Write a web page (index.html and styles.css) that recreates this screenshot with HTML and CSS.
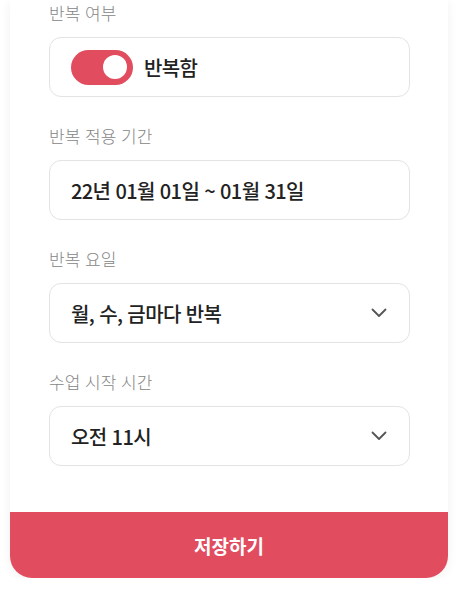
FILE: index.html
```html
<!DOCTYPE html>
<html lang="ko">
<head>
    <meta charset="UTF-8">
    <meta name="viewport" content="width=device-width, initial-scale=1.0">
    <title>반복 설정</title>
    <link rel="stylesheet" href="styles.css">
</head>
<body>
    <div class="card">
        <div class="form">
            <div class="field">
                <div class="label">반복 여부</div>
                <div class="box">
                    <span class="toggle"><span class="knob"></span></span>
                    <span class="value">반복함</span>
                </div>
            </div>
            <div class="field">
                <div class="label">반복 적용 기간</div>
                <div class="box">
                    <span class="value">22년 01월 01일 ~ 01월 31일</span>
                </div>
            </div>
            <div class="field">
                <div class="label">반복 요일</div>
                <div class="box select">
                    <span class="value">월, 수, 금마다 반복</span>
                    <svg class="chevron" width="16" height="10" viewBox="0 0 16 10">
                        <path d="M1.5 1.5 L8 8 L14.5 1.5" fill="none" stroke="#555" stroke-width="1.8" stroke-linecap="round" stroke-linejoin="round"/>
                    </svg>
                </div>
            </div>
            <div class="field">
                <div class="label">수업 시작 시간</div>
                <div class="box select">
                    <span class="value">오전 11시</span>
                    <svg class="chevron" width="16" height="10" viewBox="0 0 16 10">
                        <path d="M1.5 1.5 L8 8 L14.5 1.5" fill="none" stroke="#555" stroke-width="1.8" stroke-linecap="round" stroke-linejoin="round"/>
                    </svg>
                </div>
            </div>
        </div>
        <button class="save-btn">저장하기</button>
    </div>
</body>
</html>
```

FILE: styles.css
```css
body {
    margin: 0;
    background-color: #fff;
    font-family: "Noto Sans CJK KR", "Noto Sans", sans-serif;
    color: #222;
}

.card {
    margin: 0 10px;
    background-color: #fff;
    border-radius: 0 0 22px 22px;
    box-shadow: 0 2px 12px rgba(0, 0, 0, 0.06);
    overflow: hidden;
}

.form {
    padding: 0 38px 20px 39px;
}

.field {
    margin-bottom: 26px;
}

.label {
    font-size: 17px;
    font-weight: 300;
    line-height: 25px;
    color: #858585;
    margin-bottom: 12px;
}

.box {
    height: 60px;
    box-sizing: border-box;
    border: 1px solid #e3e3e3;
    border-radius: 12px;
    display: flex;
    align-items: center;
    padding: 0 22px 0 21px;
}

.select {
    justify-content: space-between;
}

.value {
    font-size: 20px;
    font-weight: 500;
    letter-spacing: -0.6px;
    color: #222;
}

.toggle {
    width: 62px;
    height: 35px;
    border-radius: 18px;
    background-color: #e24c5f;
    display: flex;
    align-items: center;
    justify-content: flex-end;
    padding: 0 6px;
    box-sizing: border-box;
    margin-right: 11px;
}

.knob {
    width: 24px;
    height: 24px;
    border-radius: 50%;
    background-color: #fff;
}

.chevron {
    display: block;
}

.save-btn {
    display: block;
    width: 100%;
    height: 66px;
    border: none;
    background-color: #e24c5f;
    color: #fff;
    font-family: inherit;
    font-size: 19px;
    font-weight: 700;
    cursor: pointer;
}
```
